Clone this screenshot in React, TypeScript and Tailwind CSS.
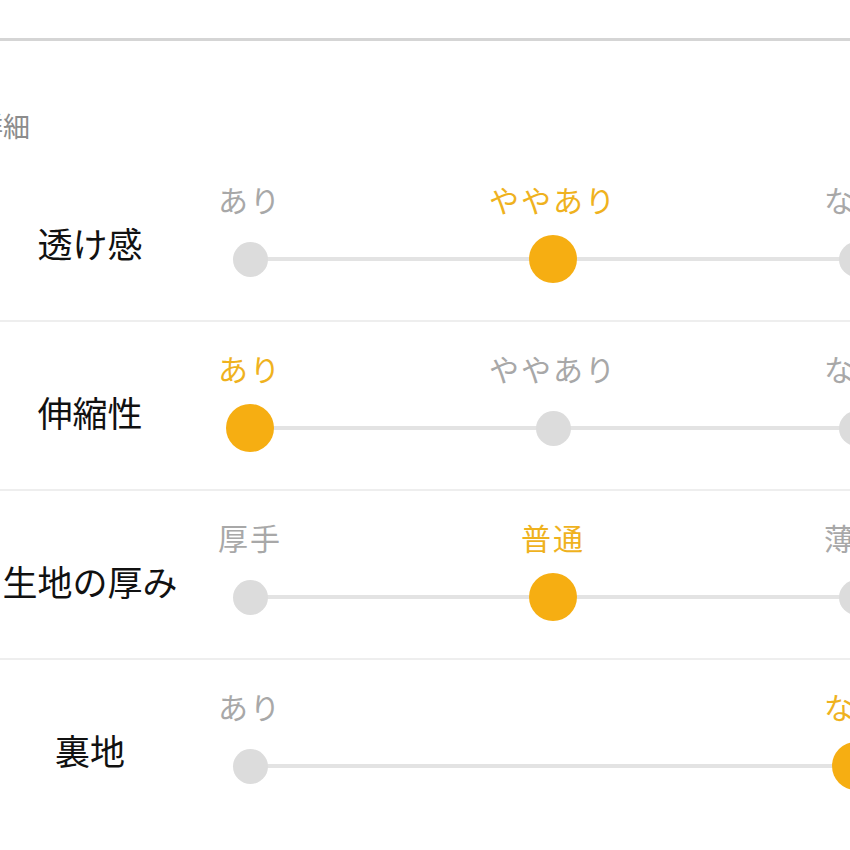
import React from "react";

type Row = { label: string; options: string[]; selected: number };

const rows: Row[] = [
  { label: "透け感", options: ["あり", "ややあり", "なし"], selected: 1 },
  { label: "伸縮性", options: ["あり", "ややあり", "なし"], selected: 0 },
  { label: "生地の厚み", options: ["厚手", "普通", "薄手"], selected: 1 },
  { label: "裏地", options: ["あり", "なし"], selected: 1 },
];

function Scale({ options, selected }: { options: string[]; selected: number }) {
  return (
    <div className="ml-[46px] flex w-[654px] shrink-0 flex-col gap-[16px]">
      <div className="flex justify-between">
        {options.map((opt, i) => (
          <div key={opt} className="flex w-[48px] justify-center">
            <span
              className={
                i === selected
                  ? "whitespace-nowrap text-[30px] leading-[40px] tracking-[2px] text-[#efb21e]"
                  : "whitespace-nowrap text-[30px] leading-[40px] tracking-[2px] text-[#a8a8a8]"
              }
            >
              {opt}
            </span>
          </div>
        ))}
      </div>
      <div className="relative flex h-[48px] items-center justify-between">
        <div className="absolute left-[24px] right-[24px] top-[22px] h-[4px] bg-[#e3e3e3]" />
        {options.map((opt, i) => (
          <div key={opt} className="relative flex w-[48px] items-center justify-center">
            {i === selected ? (
              <span className="block h-[48px] w-[48px] rounded-full bg-[#f6ae12]" />
            ) : (
              <span className="block h-[35px] w-[35px] rounded-full bg-[#dcdcdc]" />
            )}
          </div>
        ))}
      </div>
    </div>
  );
}

export default function App() {
  return (
    <div
      className="h-[850px] w-[850px] overflow-hidden bg-white"
      style={{ fontFamily: '"Noto Sans CJK JP", "Noto Sans", sans-serif' }}
    >
      <div className="h-[38px]" />
      <div className="h-[3px] bg-[#d5d5d5]" />
      <div className="pb-[9px] pt-[67px]">
        <h2 className="ml-[-24px] text-[27px] leading-[36px] text-[#8c8c8c]">詳細</h2>
      </div>
      {rows.map((row, idx) => (
        <div
          key={row.label}
          className={
            idx < rows.length - 1
              ? "flex h-[169px] items-start border-b-2 border-[#eeeeee]"
              : "flex h-[167px] items-start"
          }
        >
          <div className="w-[180px] shrink-0 whitespace-nowrap pt-[70px] text-center text-[35px] leading-[40px] text-[#111111]">
            {row.label}
          </div>
          <div className="shrink-0 pt-[26px]">
            <Scale options={row.options} selected={row.selected} />
          </div>
        </div>
      ))}
    </div>
  );
}
